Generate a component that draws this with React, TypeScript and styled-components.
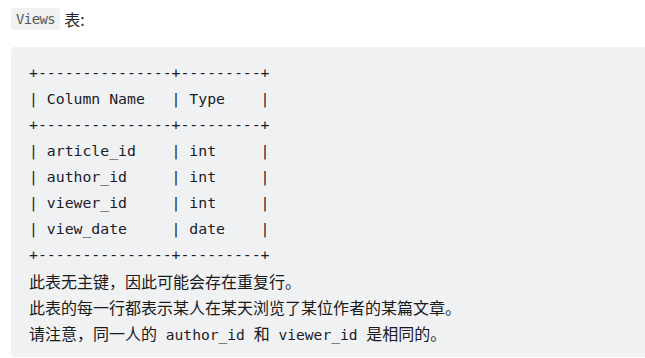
import styled, { createGlobalStyle } from "styled-components";

const GlobalStyle = createGlobalStyle`
  html, body {
    margin: 0;
    padding: 0;
    background: #fff;
    overflow: hidden;
  }
  body {
    font-family: "Noto Sans CJK SC", "Noto Sans", sans-serif;
    color: #262626;
  }
`;

const Page = styled.div`
  padding: 6px 0 0 11px;
`;

const Intro = styled.p`
  margin: 0 0 15px;
  font-size: 16px;
  line-height: 26px;
  display: flex;
  align-items: center;
  gap: 4px;
`;

const InlineCode = styled.code`
  display: inline-block;
  height: 22px;
  font-family: "DejaVu Sans Mono", "Liberation Mono", monospace;
  font-size: 14px;
  letter-spacing: -0.6px;
  line-height: 22px;
  padding: 0 5px 0 5px;
  border-radius: 4px;
  background: #f0f1f3;
  color: #5a5a5a;
`;

const CodeBlock = styled.div`
  background: #f0f1f3;
  border-radius: 4px 0 0 4px;
  padding: 13px 0 11px 18px;
  height: 310px;
  box-sizing: border-box;
`;

const TableLine = styled.div`
  font-family: "DejaVu Sans Mono", "Liberation Mono", monospace;
  font-size: 14.8px;
  line-height: 26px;
  white-space: pre;
  color: #1c1c28;
`;

const NoteLine = styled.div`
  font-family: "Noto Sans CJK SC", sans-serif;
  font-size: 16px;
  line-height: 26px;
  white-space: pre;
  color: #1a1a1a;
`;

const Mono = styled.span`
  font-family: "DejaVu Sans Mono", "Liberation Mono", monospace;
  font-size: 14.6px;
  color: #1c1c28;
`;

const tableLines = [
  "+---------------+---------+",
  "| Column Name   | Type    |",
  "+---------------+---------+",
  "| article_id    | int     |",
  "| author_id     | int     |",
  "| viewer_id     | int     |",
  "| view_date     | date    |",
  "+---------------+---------+",
];

export default function App() {
  return (
    <>
      <GlobalStyle />
      <Page>
        <Intro>
          <InlineCode>Views</InlineCode>
          <span>表:</span>
        </Intro>
        <CodeBlock>
          {tableLines.map((line, i) => (
            <TableLine key={i}>{line}</TableLine>
          ))}
          <NoteLine>此表无主键，因此可能会存在重复行。</NoteLine>
          <NoteLine>此表的每一行都表示某人在某天浏览了某位作者的某篇文章。</NoteLine>
          <NoteLine>
            请注意，同一人的<Mono> author_id </Mono>和<Mono> viewer_id </Mono>是相同的。
          </NoteLine>
        </CodeBlock>
      </Page>
    </>
  );
}
